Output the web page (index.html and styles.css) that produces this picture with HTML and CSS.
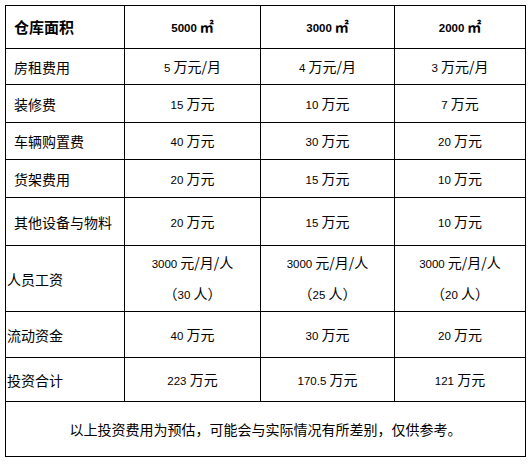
FILE: index.html
```html
<!DOCTYPE html>
<html lang="zh">
<head>
<meta charset="utf-8">
<link rel="stylesheet" href="styles.css">
</head>
<body>
<div class="page">
<table class="cost">
  <colgroup>
    <col class="c1"><col class="c2"><col class="c3"><col class="c4">
  </colgroup>
  <tr class="r-head">
    <td class="label head">仓库面积</td>
    <td class="head"><span class="num">5000</span> <span class="unit">㎡</span></td>
    <td class="head"><span class="num">3000</span> <span class="unit">㎡</span></td>
    <td class="head"><span class="num">2000</span> <span class="unit">㎡</span></td>
  </tr>
  <tr class="r1">
    <td class="label">房租费用</td>
    <td><span class="num">5</span> 万元/月</td>
    <td><span class="num">4</span> 万元/月</td>
    <td><span class="num">3</span> 万元/月</td>
  </tr>
  <tr class="r2">
    <td class="label">装修费</td>
    <td><span class="num">15</span> 万元</td>
    <td><span class="num">10</span> 万元</td>
    <td><span class="num">7</span> 万元</td>
  </tr>
  <tr class="r3">
    <td class="label">车辆购置费</td>
    <td><span class="num">40</span> 万元</td>
    <td><span class="num">30</span> 万元</td>
    <td><span class="num">20</span> 万元</td>
  </tr>
  <tr class="r4">
    <td class="label">货架费用</td>
    <td><span class="num">20</span> 万元</td>
    <td><span class="num">15</span> 万元</td>
    <td><span class="num">10</span> 万元</td>
  </tr>
  <tr class="r5">
    <td class="label">其他设备与物料</td>
    <td><span class="num">20</span> 万元</td>
    <td><span class="num">15</span> 万元</td>
    <td><span class="num">10</span> 万元</td>
  </tr>
  <tr class="r6">
    <td class="label flush">人员工资</td>
    <td><div class="line"><span class="num">3000</span> 元/月/人</div><div class="line"><span class="paren">（</span><span class="num">30</span> 人<span class="paren">）</span></div></td>
    <td><div class="line"><span class="num">3000</span> 元/月/人</div><div class="line"><span class="paren">（</span><span class="num">25</span> 人<span class="paren">）</span></div></td>
    <td><div class="line"><span class="num">3000</span> 元/月/人</div><div class="line"><span class="paren">（</span><span class="num">20</span> 人<span class="paren">）</span></div></td>
  </tr>
  <tr class="r7">
    <td class="label flush">流动资金</td>
    <td><span class="num">40</span> 万元</td>
    <td><span class="num">30</span> 万元</td>
    <td><span class="num">20</span> 万元</td>
  </tr>
  <tr class="r8">
    <td class="label flush">投资合计</td>
    <td><span class="num">223</span> 万元</td>
    <td><span class="num">170.5</span> 万元</td>
    <td><span class="num">121</span> 万元</td>
  </tr>
  <tr class="r9">
    <td class="note" colspan="4">以上投资费用为预估，可能会与实际情况有所差别，仅供参考。</td>
  </tr>
</table>
</div>
</body>
</html>
```

FILE: styles.css
```css
html, body {
  margin: 0;
  padding: 0;
  background: #fff;
}
.page {
  padding: 5px 0 0 5px;
}
.cost {
  border-collapse: collapse;
  table-layout: fixed;
  width: 520px;
  font-family: "Noto Sans CJK SC", "Noto Sans", sans-serif;
  font-size: 14px;
  color: #000;
}
.c1 { width: 119px; }
.c2 { width: 136px; }
.c3 { width: 134px; }
.c4 { width: 131px; }
.cost td {
  border: 1px solid #000;
  padding: 0;
  text-align: center;
  vertical-align: middle;
  line-height: 20px;
}
.cost td.label {
  text-align: left;
  padding-left: 8px;
}
.cost td.label.flush {
  padding-left: 1px;
}
.head {
  font-weight: bold;
  font-size: 12px;
}
.cost td.label.head {
  font-size: 15px;
}
.num {
  font-family: "Liberation Sans", Arial, sans-serif;
  font-size: 11.5px;
}
.head .num {
  font-size: 11.5px;
}
.unit {
  font-size: 14px;
}
.paren {
  display: inline-block;
  width: 14px;
  text-align: center;
}
.line {
  line-height: 29px;
}
.r-head td { height: 42px; }
.r1 td { height: 35px; }
.r2 td { height: 37px; }
.r3 td { height: 36px; }
.r4 td { height: 37px; }
.r5 td { height: 47px; }
.r6 td { height: 65px; }
.r7 td { height: 45px; }
.r8 td { height: 43px; }
.r9 td { height: 54px; }
.cost td.note {
  letter-spacing: 0;
}
```
